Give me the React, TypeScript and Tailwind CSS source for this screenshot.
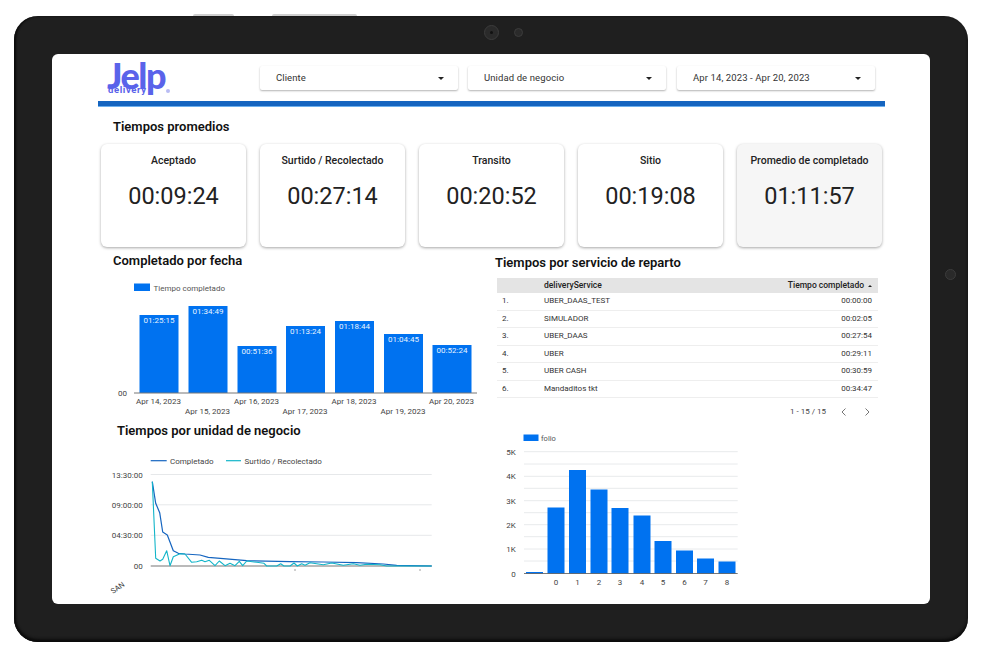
const cards = [
  { title: "Aceptado", value: "00:09:24" },
  { title: "Surtido / Recolectado", value: "00:27:14" },
  { title: "Transito", value: "00:20:52" },
  { title: "Sitio", value: "00:19:08" },
  { title: "Promedio de completado", value: "01:11:57", shaded: true },
];

const dateBars = [
  { x: 139.5, top: 315, label: "01:25:15", date: "Apr 14, 2023", row: 0 },
  { x: 188.5, top: 306, label: "01:34:49", date: "Apr 15, 2023", row: 1 },
  { x: 237.5, top: 346, label: "00:51:36", date: "Apr 16, 2023", row: 0 },
  { x: 286, top: 326, label: "01:13:24", date: "Apr 17, 2023", row: 1 },
  { x: 335, top: 321, label: "01:18:44", date: "Apr 18, 2023", row: 0 },
  { x: 384, top: 334, label: "01:04:45", date: "Apr 19, 2023", row: 1 },
  { x: 432.5, top: 345, label: "00:52:24", date: "Apr 20, 2023", row: 0 },
];

const services = [
  ["UBER_DAAS_TEST", "00:00:00"],
  ["SIMULADOR", "00:02:05"],
  ["UBER_DAAS", "00:27:54"],
  ["UBER", "00:29:11"],
  ["UBER CASH", "00:30:59"],
  ["Mandaditos tkt", "00:34:47"],
];

const folioBars = [
  { x: 526, top: 572, label: "" },
  { x: 547.5, top: 507.5, label: "0" },
  { x: 569, top: 470, label: "1" },
  { x: 590.5, top: 489.5, label: "2" },
  { x: 611.5, top: 508, label: "3" },
  { x: 633.5, top: 515.5, label: "4" },
  { x: 654.5, top: 541, label: "5" },
  { x: 676, top: 550.5, label: "6" },
  { x: 697, top: 558.5, label: "7" },
  { x: 718.5, top: 561.5, label: "8" },
];

// traced from the reference, 3x coordinates with origin at (90,420)
const completado = [[187,185],[197,250],[209,278],[218,336],[232,345],[250,392],[265,400],[285,402],[330,405],[355,412],[400,416],[470,422],[600,425],[700,426],[800,428],[880,432],[920,436],[1025,438]];
const surtido = [[187,185],[197,415],[210,423],[218,418],[230,392],[240,437],[250,410],[270,401],[285,402],[305,427],[320,425],[335,421],[345,425],[358,421],[375,437],[388,423],[405,437],[420,430],[435,437],[448,424],[458,437],[470,423],[500,427],[522,430],[530,438],[560,438],[572,431],[582,438],[600,438],[612,429],[622,438],[635,431],[645,436],[660,428],[700,434],[725,429],[760,436],[790,431],[810,436],[830,433],[870,434],[890,438],[1025,438]];

function toPoints(pts: number[][]) {
  return pts.map(([x, y]) => `${(x / 3 + 90).toFixed(1)},${(y / 3 + 420).toFixed(1)}`).join(" ");
}

function Dropdown({ label, className = "" }: { label: string; className?: string }) {
  return (
    <div className={`flex items-center justify-between w-[198px] h-[24px] pl-4 pr-[14px] bg-white rounded-[2px] shadow-[0_1px_2px_rgba(0,0,0,0.3)] text-[9.5px] tracking-[0.1px] text-[#333] ${className}`}>
      <span>{label}</span>
      <span className="w-0 h-0 border-x-[3px] border-x-transparent border-t-[3px] border-t-[#222]" />
    </div>
  );
}

function Logo() {
  return (
    <div className="relative w-[152px] h-[47px] text-[#5a63ea]">
      <div className="absolute left-[55px] top-[1px] font-[Lato,sans-serif] font-black text-[36px] leading-[40px] tracking-[-1.5px]">Jelp</div>
      <div className="absolute left-[56px] top-[30px] font-[Roboto,sans-serif] font-bold text-[9.5px] leading-[12px] tracking-[0.6px]">delivery</div>
      <span className="absolute left-[114px] top-[35px] w-[4px] h-[4px] rounded-full bg-[#b9bcf4]" />
    </div>
  );
}

function MetricCard({ title, value, shaded }: { title: string; value: string; shaded?: boolean }) {
  return (
    <div className={`flex flex-col items-center w-[145px] h-[103px] rounded-[6px] pt-[10px] shadow-[0_1px_3px_rgba(0,0,0,0.35)] ${shaded ? "bg-[#f6f6f6]" : "bg-white"}`}>
      <div className="text-[10.5px] leading-[14px] font-medium text-[#222]">{title}</div>
      <div className="mt-[14px] text-[23.5px] leading-[28px] text-[#222]">{value}</div>
    </div>
  );
}

function DateChart() {
  return (
    <svg viewBox="110 271 385 150" className="w-[385px] h-[150px] block">
      <rect x="134" y="283.5" width="16" height="7.5" fill="#0072f0" />
      <text x="153.5" y="290.5" fontSize="8" fill="#555">Tiempo completado</text>
      {dateBars.map((b) => (
        <g key={b.date}>
          <rect x={b.x} y={b.top} width="39" height={393 - b.top} fill="#0072f0" />
          <text x={b.x + 19.5} y={b.top + 7.8} fontSize="8" fill="#e8f2ff" textAnchor="middle">{b.label}</text>
          <text x={b.x + 19} y={b.row ? 414 : 404} fontSize="8" fill="#444" textAnchor="middle">{b.date}</text>
        </g>
      ))}
      <line x1="134" x2="477" y1="393" y2="393" stroke="#777" strokeWidth="1" />
      <text x="127" y="396" fontSize="8" fill="#444" textAnchor="end">00</text>
    </svg>
  );
}

function LineChart() {
  const grid = [
    { y: 474.5, label: "13:30:00" },
    { y: 504.8, label: "09:00:00" },
    { y: 535.3, label: "04:30:00" },
  ];
  return (
    <svg viewBox="110 441 385 163" className="w-[385px] h-[163px] block">
      <line x1="150.7" x2="166.7" y1="460.7" y2="460.7" stroke="#1565c0" strokeWidth="1.2" />
      <text x="170" y="463.5" fontSize="8" fill="#444">Completado</text>
      <line x1="226" x2="241" y1="460.7" y2="460.7" stroke="#12b5c9" strokeWidth="1.2" />
      <text x="244.5" y="463.5" fontSize="8" fill="#444">Surtido / Recolectado</text>
      {grid.map((g) => (
        <g key={g.label}>
          <line x1="150.7" x2="431.7" y1={g.y} y2={g.y} stroke="#e6e8ea" strokeWidth="1" />
          <text x="142.7" y={g.y + 3} fontSize="8" fill="#444" textAnchor="end">{g.label}</text>
        </g>
      ))}
      <text x="142.7" y="569" fontSize="8" fill="#444" textAnchor="end">00</text>
      <line x1="150.7" x2="431.7" y1="566" y2="566" stroke="#777" strokeWidth="1.2" />
      <line x1="295" x2="295" y1="569" y2="571" stroke="#888" strokeWidth="0.8" />
      <line x1="420" x2="420" y1="569" y2="571" stroke="#888" strokeWidth="0.8" />
      <polyline points={toPoints(completado)} fill="none" stroke="#1565c0" strokeWidth="1.2" strokeLinejoin="round" />
      <polyline points={toPoints(surtido)} fill="none" stroke="#12b5c9" strokeWidth="1.1" strokeLinejoin="round" />
      <text x="113" y="594" fontSize="7.5" fill="#444" transform="rotate(-35 113 594)">SAN</text>
    </svg>
  );
}

function FolioChart() {
  const ticks = [
    { y: 451.7, label: "5K" },
    { y: 464 },
    { y: 476.3, label: "4K" },
    { y: 488.3 },
    { y: 500.7, label: "3K" },
    { y: 512.7 },
    { y: 524.7, label: "2K" },
    { y: 536.7 },
    { y: 549, label: "1K" },
    { y: 561 },
  ];
  return (
    <svg viewBox="495 430 250 160" className="w-[250px] h-[160px] block">
      <rect x="523.5" y="434.5" width="15" height="6.5" fill="#0072f0" />
      <text x="541" y="440.5" fontSize="7.5" fill="#555">folio</text>
      {ticks.map((t) => (
        <g key={t.y}>
          <line x1="524" x2="737.7" y1={t.y} y2={t.y} stroke="#e8eaec" strokeWidth="1" />
          {t.label && <text x="515.7" y={t.y + 3} fontSize="8" fill="#444" textAnchor="end">{t.label}</text>}
        </g>
      ))}
      {folioBars.map((b) => (
        <g key={b.x}>
          <rect x={b.x} y={b.top} width="17" height={573.5 - b.top} fill="#0072f0" />
          {b.label && <text x={b.x + 8.5} y="585" fontSize="8" fill="#444" textAnchor="middle">{b.label}</text>}
        </g>
      ))}
      <line x1="524" x2="737.7" y1="573.5" y2="573.5" stroke="#555" strokeWidth="0.8" />
      <text x="515.7" y="576.5" fontSize="8" fill="#444" textAnchor="end">0</text>
    </svg>
  );
}

function ServiceTable() {
  return (
    <div className="ml-[2px] mt-[5px] w-[381px] text-[8px] text-[#333]">
      <div className="flex items-center h-[15px] bg-[#e4e4e4] font-medium text-[8.5px] text-[#222]">
        <span className="ml-[47px]">deliveryService</span>
        <span className="ml-auto mr-[6px] flex items-center gap-[4px]">
          Tiempo completado
          <span className="w-0 h-0 border-x-[2px] border-x-transparent border-b-[2px] border-b-[#222]" />
        </span>
      </div>
      {services.map(([name, time], i) => (
        <div key={name} className="flex items-center h-[17.5px] border-b border-[#eeeeee]">
          <span className="w-[47px] pl-[5px]">{i + 1}.</span>
          <span>{name}</span>
          <span className="ml-auto mr-[6px]">{time}</span>
        </div>
      ))}
    </div>
  );
}

export default function App() {
  return (
    <div className="w-[984px] h-[661px] bg-white pt-4 pl-[14px] overflow-hidden font-[Roboto,sans-serif]">
      <div className="relative w-[954px] h-[626px] p-[38px] rounded-[24px] bg-[#1f1f1f] shadow-[inset_2px_0_2px_#0c0c0c,inset_0_-3px_3px_#0c0c0c]">
        {/* side buttons and cameras */}
        <span className="absolute left-[179px] top-[-2px] w-[41px] h-[2px] rounded-t-[2px] bg-[#cfcfcf]" />
        <span className="absolute left-[258px] top-[-2px] w-[85px] h-[2px] rounded-t-[2px] bg-[#cfcfcf]" />
        <span className="absolute left-[470px] top-[9px] w-[15px] h-[15px] rounded-full bg-[#2a2a2a] border border-[#3c3c3c] flex items-center justify-center">
          <span className="w-[3px] h-[3px] rounded-full bg-[#111]" />
        </span>
        <span className="absolute left-[500px] top-[12px] w-[9px] h-[9px] rounded-full bg-[#2a2a2a] border border-[#3c3c3c]" />
        <span className="absolute left-[931px] top-[253px] w-[11px] h-[11px] rounded-full bg-[#2a2a2a] border border-[#3c3c3c]" />

        <div className="w-[878px] h-[550px] rounded-[6px] bg-white overflow-hidden">
          <div className="flex items-start h-[47px] pl-0">
            <Logo />
            <div className="flex gap-[10px] mt-[12px] ml-[56px]">
              <Dropdown label="Cliente" />
              <Dropdown label="Unidad de negocio" />
              <Dropdown label="Apr 14, 2023 - Apr 20, 2023" className="ml-px" />
            </div>
          </div>
          <div className="ml-[46px] w-[787px] h-[6px] bg-[#1565c0] border-b border-[#6db0ee]" />

          <h2 className="ml-[61px] mt-[10px] h-[20px] text-[13px] leading-[20px] font-semibold text-[#111]">Tiempos promedios</h2>
          <div className="flex gap-[14px] ml-[49px] mt-[7px]">
            {cards.map((c) => (
              <MetricCard key={c.title} {...c} />
            ))}
          </div>

          <div className="flex ml-[58px] mt-[4px]">
            <div className="w-[385px]">
              <h2 className="pl-[3px] h-[20px] text-[13px] leading-[20px] font-semibold text-[#111]">Completado por fecha</h2>
              <DateChart />
              <h2 className="pl-[7px] h-[20px] text-[13px] leading-[20px] font-semibold text-[#111]">Tiempos por unidad de negocio</h2>
              <LineChart />
            </div>
            <div className="w-[400px]">
              <h2 className="mt-[2px] h-[20px] text-[13px] leading-[20px] font-semibold text-[#111]">Tiempos por servicio de reparto</h2>
              <ServiceTable />
              <div className="flex items-center justify-end w-[383px] h-[18px] mt-[5px] text-[8px] text-[#444]">
                <span className="mr-[13px]">1 - 15 / 15</span>
                <svg width="10" height="10" viewBox="0 0 10 10" fill="none" stroke="#666" strokeWidth="0.9" className="mr-[13px]"><path d="M6.5 1.5 3 5l3.5 3.5" /></svg>
                <svg width="10" height="10" viewBox="0 0 10 10" fill="none" stroke="#666" strokeWidth="0.9" className="mr-[6px]"><path d="M3.5 1.5 7 5 3.5 8.5" /></svg>
              </div>
              <div className="mt-[9px]">
                <FolioChart />
              </div>
            </div>
          </div>
        </div>
      </div>
    </div>
  );
}
